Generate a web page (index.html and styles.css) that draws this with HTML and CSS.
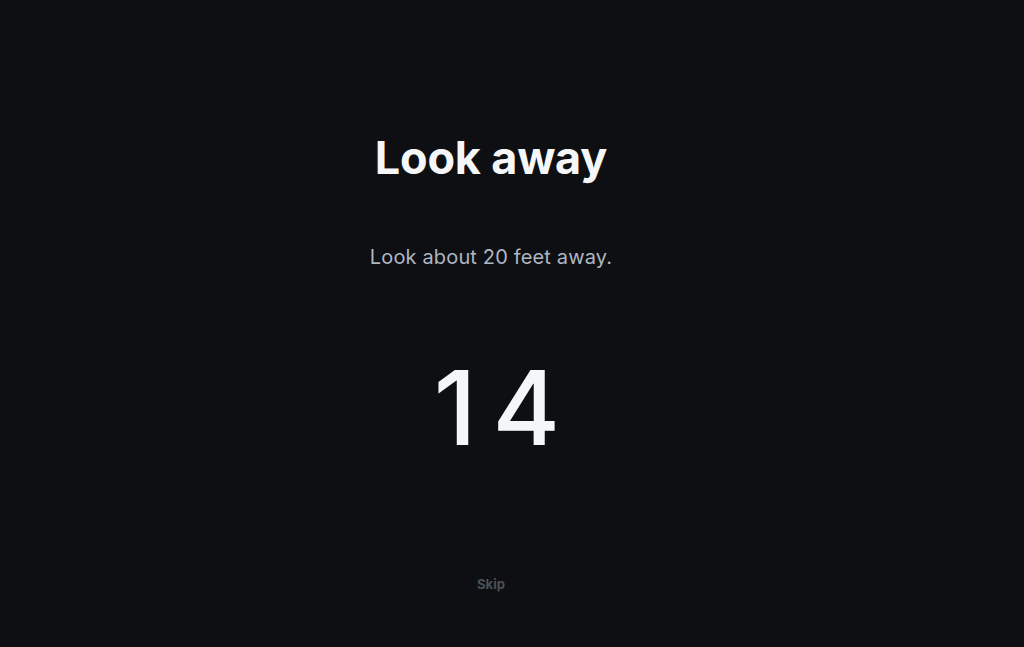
FILE: index.html
```html
<!DOCTYPE html>
<html lang="en">
<head>
<meta charset="utf-8">
<title>Look away</title>
<link rel="stylesheet" href="styles.css">
</head>
<body>
<main class="screen">
  <h1 class="title">Look away</h1>
  <p class="hint">Look about 20 feet away.</p>
  <div class="count">14</div>
  <button class="skip" type="button">Skip</button>
</main>
</body>
</html>
```
FILE: styles.css
```css
html, body {
  margin: 0;
  height: 100%;
  background: #0d0f13;
}
body {
  font-family: Inter, "Noto Sans", sans-serif;
  color: #f5f6f8;
}
.screen {
  box-sizing: border-box;
  height: 100%;
  width: 982px;
  display: flex;
  flex-direction: column;
  align-items: center;
  padding-top: 128px;
}
.title {
  margin: 0;
  font-size: 45px;
  font-weight: 700;
  line-height: 60px;
  letter-spacing: -0.2px;
}
.hint {
  margin: 54px 0 0;
  font-size: 20px;
  line-height: 30px;
  letter-spacing: 0.15px;
  color: #aeb6c2;
}
.count {
  margin-top: 76px;
  padding-left: 28px;
  font-size: 103px;
  font-weight: 500;
  line-height: 120px;
  letter-spacing: 16px;
}
.skip {
  margin-top: 108px;
  background: none;
  border: 0;
  padding: 0;
  font-family: inherit;
  font-size: 13px;
  font-weight: 700;
  line-height: 16px;
  color: #4b4f57;
  cursor: pointer;
}
```
